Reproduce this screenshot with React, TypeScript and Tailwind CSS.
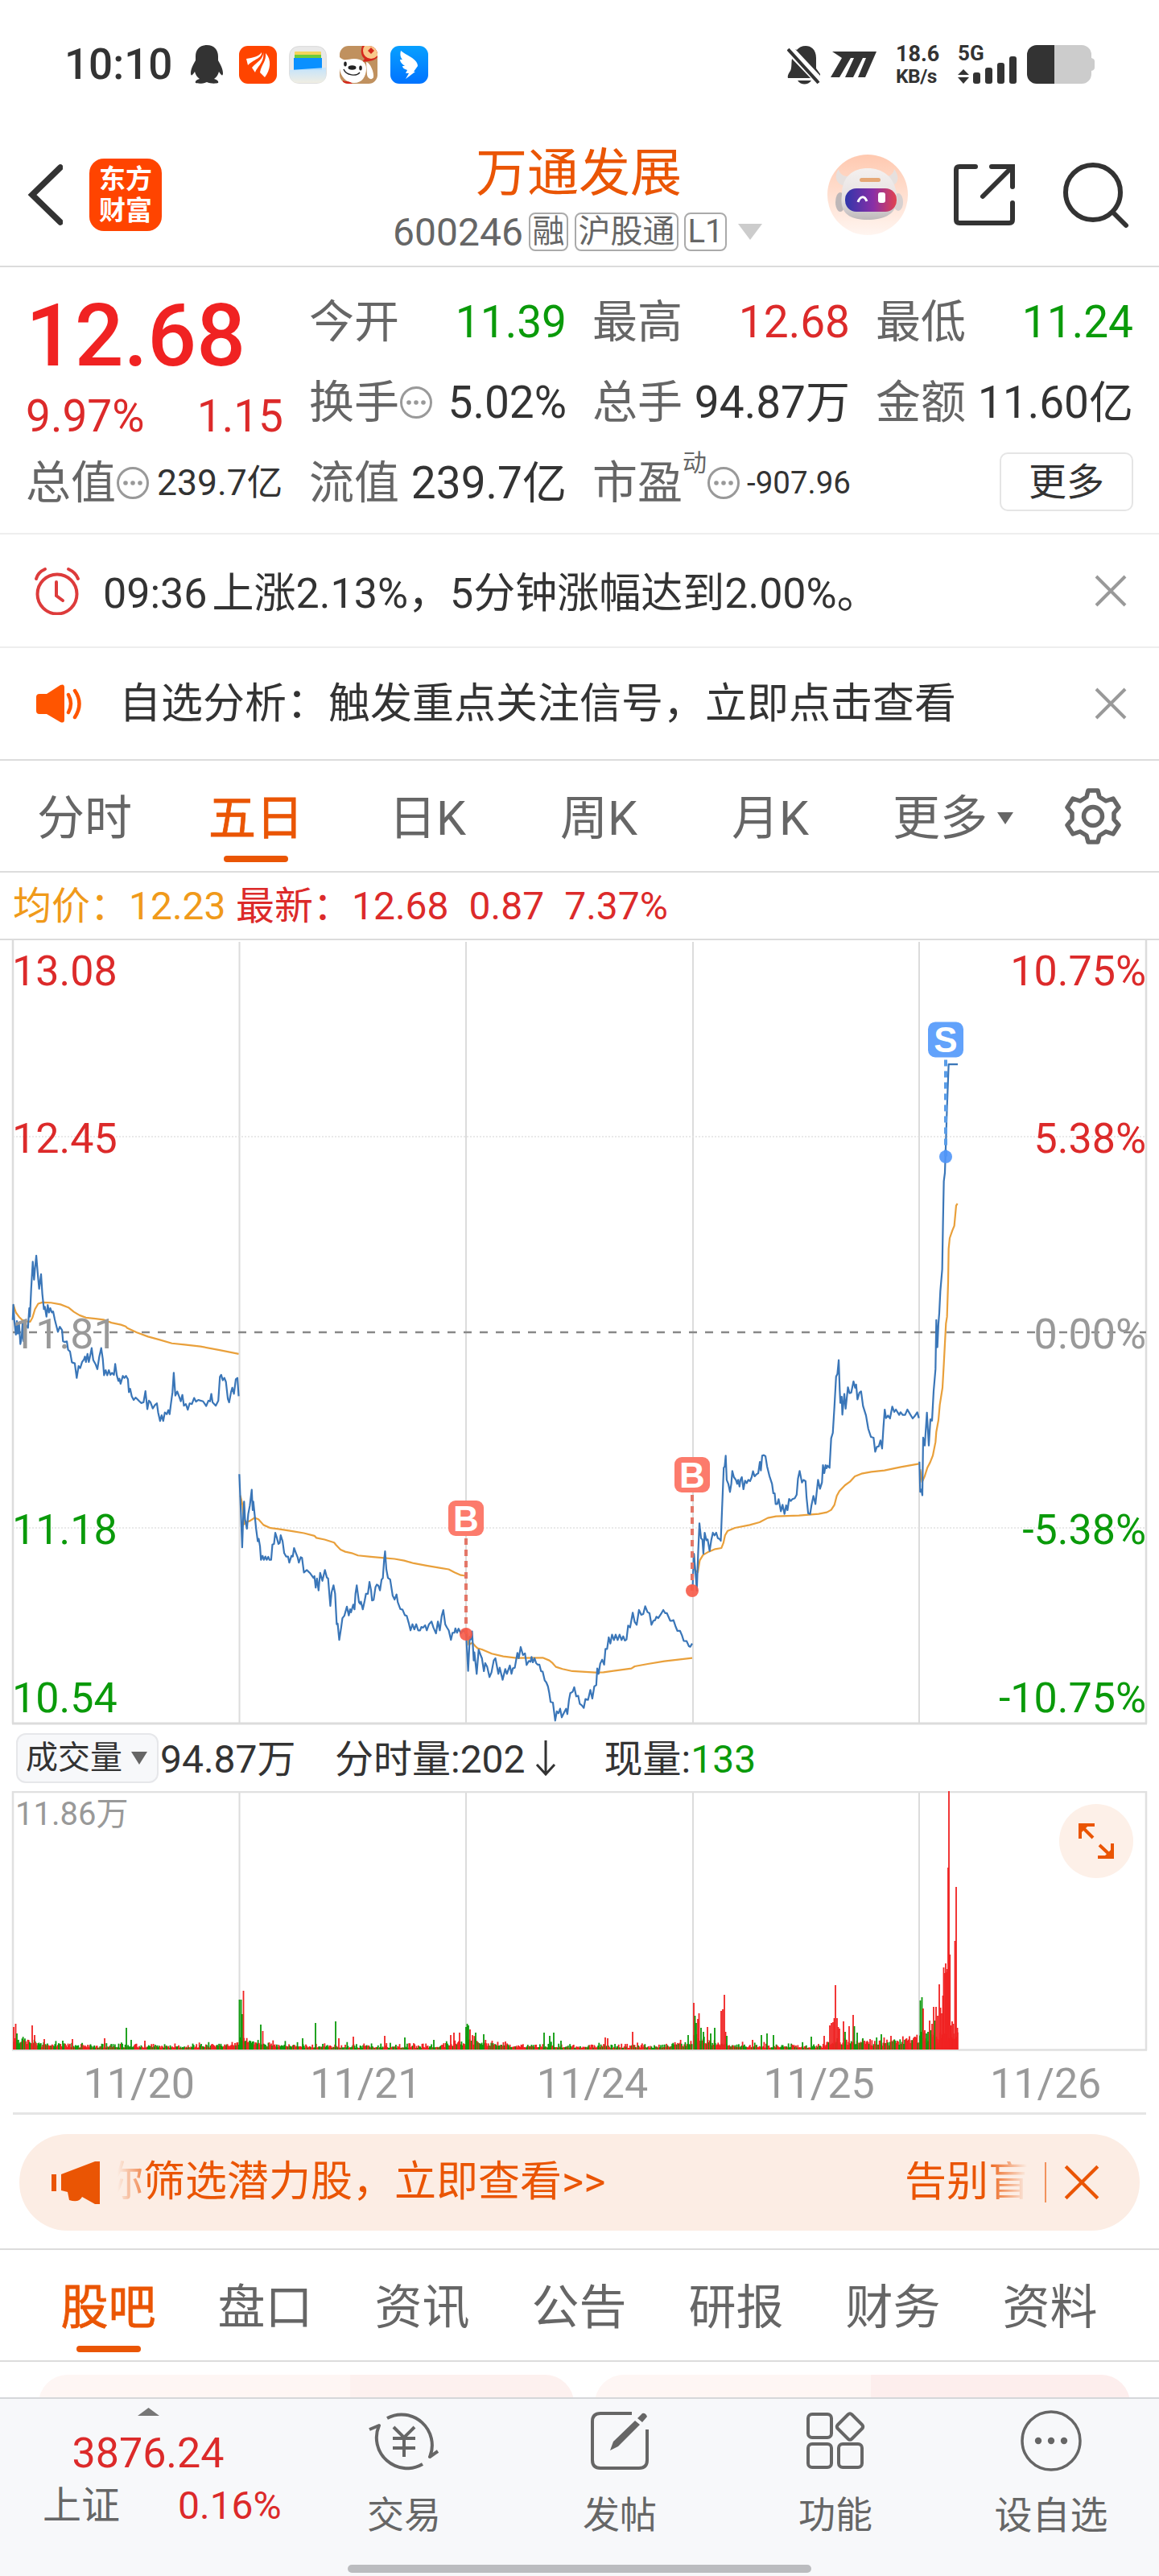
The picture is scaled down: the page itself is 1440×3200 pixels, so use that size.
import React from "react";

const INK = "#333333";
const GRAY = "#666666";

// price polylines: one group per stretch of days, each in its own plot space
const priceGroups = [
  {
    transform: "translate(0 332) scale(.3954 .4209)",
    price: [
      "40,332 42,287 45,335 50,375 53,335 56,372 60,345 64,403 68,385 71,340 74,395 78,340 83,350 88,355 92,297 94,322 98,240 103,160 107,213 110,180 114,142 119,200 123,240 129,197 133,255 138,300 141,293 146,322 150,288 154,310 158,297 163,310 167,307 172,330 176,345 182,367 188,352 195,362 198,395 203,397 210,395 214,420 220,425 226,457 235,460 241,503 247,468 252,474 258,456 264,448 267,440 270,456 275,432 279,456 284,435 288,415 293,450 300,462 306,477 312,440 318,415 323,447 327,495 332,480 337,495 342,480 347,494 352,488 358,494 362,462 367,495 372,512 375,505 379,520 386,497 391,503 396,497 402,507 405,545 409,535 414,557 420,568 426,561 432,566 438,572 444,577 451,575 457,542 463,595 468,570 473,575 480,593 487,583 493,578 497,605 503,630 508,613 513,630 518,605 524,610 529,598 533,610 537,580 542,545 546,488 551,555 557,543 563,558 568,572 573,553 578,585 584,580 590,597 596,578 603,580 610,562 616,573 623,568 630,570 638,572 648,586 655,570 660,572 664,550 668,575 678,585 686,570 691,500 695,494 700,510 705,503 710,515 716,565 720,575 726,545 730,532 735,550 741,507 746,503 750,557",
      "752,787 757,900 761,1003 764,920 767,868 770,920 776,948 780,905 785,880 791,833 794,893 796,868 800,905 805,950 810,985 813,978 817,1000 820,1040 825,1028 829,1040 834,1030 838,1040 843,1031 847,1040 852,1040 856,995 861,993 865,960 870,975 875,993 879,990 882,967 888,985 893,1020 899,1030 905,1030 909,1048 916,1028 920,1030 924,1005 930,1020 935,1032 939,1048 945,1032 949,1034 955,1077 964,1070 975,1080 985,1093 988,1088 992,1122 996,1095 1001,1130 1006,1078 1013,1102 1021,1070 1027,1092 1031,1095 1038,1176 1042,1135 1048,1115 1053,1140 1058,1230 1061,1228 1066,1276 1072,1240 1076,1212 1082,1205 1090,1178 1096,1204 1100,1186 1103,1195 1110,1172 1114,1186 1117,1140 1121,1115 1128,1165 1132,1170 1134,1163 1140,1186 1146,1160 1150,1140 1156,1140 1161,1105 1166,1130 1169,1160 1174,1158 1180,1120 1184,1113 1189,1116 1194,1130 1199,1098 1203,1094 1207,1040 1210,1015 1214,1068 1219,1093 1226,1098 1234,1146 1240,1157 1246,1142 1250,1165 1258,1185 1265,1187 1272,1203 1278,1205 1284,1225 1290,1248 1296,1230 1302,1245 1308,1230 1314,1248 1320,1248 1324,1238 1329,1240 1336,1233 1341,1248 1348,1230 1356,1222 1362,1240 1370,1257 1376,1222 1382,1248 1388,1205 1393,1188 1399,1230 1404,1239 1410,1248 1417,1276 1422,1255 1428,1255 1431,1242 1436,1255 1441,1243 1448,1257 1455,1248 1463,1255",
    ],
    average: [
      "42,287 50,310 62,325 70,332 82,336 95,337 102,325 110,300 120,284 133,280 160,281 190,286 215,295 232,308 250,318 270,325 300,328 325,331 350,340 380,346 395,351 400,356 430,369 465,381 500,390 540,401 580,405 630,410 690,421 750,432",
      "755,850 762,877 767,935 775,928 785,925 800,916 812,920 828,937 850,946 875,949 915,955 955,961 988,969 994,975 1020,980 1050,989 1056,996 1070,1010 1085,1016 1105,1020 1125,1027 1165,1031 1200,1034 1240,1037 1270,1042 1300,1050 1340,1057 1385,1064 1410,1068 1428,1077 1448,1085 1463,1087",
    ],
  },
  {
    transform: "translate(560 532) scale(.4082 .3333)",
    price: [
      "47,990 50,1060 53,1127 58,1000 61,1010 65,980 70,1088 72,1058 79,1138 85,1048 91,1068 95,1080 101,1128 105,1098 111,1112 118,1150 124,1133 131,1088 136,1080 145,1138 149,1115 158,1160 166,1120 171,1138 180,1107 185,1138 189,1118 195,1115 203,1060 207,1080 213,1038 220,1068 226,1062 231,1105 238,1090 243,1093 246,1075 250,1095 255,1080 260,1098 265,1104 270,1104 275,1128 280,1130 286,1162 291,1170 296,1185 300,1210 304,1243 311,1245 318,1312 323,1278 328,1285 333,1268 338,1300 344,1285 351,1268 355,1288 360,1235 364,1210 371,1205 376,1188 382,1222 388,1220 393,1250 399,1255 405,1265 410,1232 418,1235 425,1198 431,1230 437,1185 443,1180 446,1118 450,1138 455,1100 461,1085 467,1104 471,1045 476,1045 481,1002 486,1025 491,992 497,1012 502,992 508,1012 514,992 520,1012 525,998 530,1014 535,1010 540,958 546,965 554,910 560,945 566,955 573,900 580,918 586,915 592,886 599,908 605,912 611,955 617,940 622,938 626,925 632,930 640,915 647,900 653,912 658,912 668,940 674,940 678,938 684,960 690,978 698,978 704,995 709,1015 718,1016 725,1035 729,1037 735,1025",
      "736,828 740,690 745,760 749,828 753,690 757,577 762,633 766,637 769,690 773,612 778,640 782,637 788,680 793,640 798,612 803,622 808,612 813,632 818,635 822,642 826,520 831,370 834,365 837,325 840,415 845,430 850,460 854,430 857,382 862,405 868,415 872,430 875,415 879,440 882,415 886,405 891,450 896,418 901,427 906,415 911,420 916,405 920,383 925,402 930,395 936,390 941,348 944,380 948,325 953,323 958,327 963,365 970,400 978,430 982,465 986,465 989,505 994,505 998,487 1005,532 1010,508 1016,542 1021,510 1025,528 1030,486 1035,494 1040,487 1047,484 1053,470 1057,410 1062,382 1069,425 1074,415 1080,420 1083,480 1088,540 1094,542 1098,510 1104,475 1110,505 1118,415 1124,448 1130,425 1133,360 1137,390 1141,360 1144,372 1147,362 1153,370 1158,260 1163,240 1168,140 1173,30 1177,20 1181,-31 1184,80 1186,128 1190,105 1192,172 1198,95 1202,150 1209,70 1214,92 1219,90 1226,48 1231,72 1234,60 1238,115 1244,90 1249,85 1255,140 1264,175 1271,225 1279,255 1287,258 1292,310 1297,292 1303,290 1308,268 1313,298 1317,220 1321,153 1325,185 1331,175 1337,186 1344,142 1350,162 1355,153 1365,173 1369,163 1376,173 1383,173 1390,153 1398,170 1406,186 1412,178 1420,163 1425,185",
    ],
    average: [
      "50,985 55,1030 66,1022 75,1035 82,1043 95,1047 125,1063 160,1073 200,1079 280,1078 300,1088 310,1098 320,1112 340,1120 370,1128 440,1133 465,1132 500,1126 550,1118 560,1110 600,1101 650,1091 735,1079",
      "740,690 743,750 752,760 758,715 768,695 785,683 805,673 824,669 830,650 835,622 843,605 865,594 910,583 940,573 965,557 990,551 1060,548 1120,542 1145,536 1158,527 1168,508 1175,475 1183,457 1200,435 1215,422 1230,402 1250,392 1280,385 1320,380 1370,367 1425,355",
    ],
  },
  {
    transform: "translate(1000 72) scale(.3333 .4209)",
    price: [
      "427,1368 430,1457 434,1450 438,1467 441,1297 447,1320 455,1223 462,1320 468,1243 474,1247 480,1160 487,1095 490,950 494,1030 498,960 501,930 505,865 512,800 515,660 518,540 522,515 524,467 530,320 536,195 570,195",
    ],
    average: [
      "430,1390 437,1428 447,1410 457,1385 467,1370 477,1350 487,1310 490,1280 498,1245 503,1200 513,1150 518,1080 526,960 530,940 534,840 536,740 540,708 550,685 557,672 564,612 569,606",
    ],
  },
];

const dayLines = [297.5, 579, 861, 1142];

const leftAxis = [
  { y: 56, text: "13.08", fill: "#dc2a2a" },
  { y: 264, text: "12.45", fill: "#dc2a2a" },
  { y: 507, text: "11.81", fill: "#999999" },
  { y: 750, text: "11.18", fill: "#0a9a0a" },
  { y: 959, text: "10.54", fill: "#0a9a0a" },
];

const rightAxis = [
  { y: 56, text: "10.75%", fill: "#dc2a2a" },
  { y: 264, text: "5.38%", fill: "#dc2a2a" },
  { y: 507, text: "0.00%", fill: "#999999" },
  { y: 750, text: "-5.38%", fill: "#0a9a0a" },
  { y: 959, text: "-10.75%", fill: "#0a9a0a" },
];

const markers = [
  { x: 579, top: 696, dot: 862, label: "B", fill: "#fc7b6c", line: "#e37768", dotFill: "#f75a48" },
  { x: 860, top: 642, dot: 808, label: "B", fill: "#fc7b6c", line: "#e37768", dotFill: "#f75a48" },
  { x: 1175, top: 101.5, dot: 269, label: "S", fill: "#62a2fb", line: "#5a9de8", dotFill: "#4f95f8" },
];

// [x, height, up]
const spikes: [number, number, number][] = [
  [17, 28, 1], [19.5, 32, 1], [21, 20, 0], [40, 30, 1], [43, 18, 1], [55, 13, 1], [78, 11, 0], [90, 13, 1], [130, 14, 1], [157, 27, 0], [163, 12, 0], [180, 11, 1],
  [297.5, 62, 0], [299.5, 62, 0], [301, 44, 0], [302.5, 73, 1], [324, 31, 0], [326.5, 23, 1], [376, 14, 0], [392, 33, 0], [417, 35, 0], [421, 14, 1], [439, 16, 1], [478, 17, 1], [503, 15, 0], [539, 12, 0], [560, 18, 1], [564, 21, 1], [571, 21, 1],
  [579, 28, 0], [580.5, 32, 0], [582, 30, 0], [584, 25, 1], [591, 21, 0], [601, 19, 0], [628, 10, 1], [676, 21, 0], [683, 17, 0], [688, 21, 0], [697, 11, 0], [752, 15, 1], [755, 14, 1], [786, 22, 1],
  [855, 18, 0], [862, 58, 1], [863.5, 42, 0], [865, 33, 0], [867, 38, 1], [868.5, 45, 1], [871, 27, 0], [874, 22, 0], [879, 28, 1], [883, 20, 0], [888, 27, 0], [896, 48, 1], [898, 50, 1], [900, 68, 1], [901.5, 22, 1], [903, 17, 0],
  [935, 12, 1], [946, 18, 0], [953, 20, 0], [961, 18, 0], [1008, 16, 0], [1024, 17, 1], [1031, 30, 1], [1033, 33, 1], [1035, 34, 1], [1036.5, 39, 1], [1038, 80, 1], [1040, 39, 1], [1041.5, 28, 1], [1043, 26, 1], [1048, 35, 1], [1050, 22, 0], [1055, 29, 1], [1060, 43, 1], [1061.5, 29, 0], [1065, 21, 0], [1072, 14, 0], [1095, 19, 0], [1107, 17, 1],
  [1135, 14, 1], [1138, 15, 1], [1143.5, 61, 0], [1145.5, 65, 0], [1147, 51, 1], [1149, 24, 1], [1151, 20, 0], [1153, 22, 0], [1155, 36, 1], [1156.5, 24, 0], [1158, 32, 1], [1160, 53, 1], [1161.5, 36, 0], [1163, 53, 1], [1165, 42, 1], [1167, 81, 1], [1168.5, 52, 1], [1170, 45, 1], [1171.5, 67, 1], [1172.5, 102, 1], [1174, 95, 1], [1175, 107, 1], [1176, 96, 1], [1177, 100, 1], [1178, 226, 1], [1179, 321, 1], [1180.2, 118, 1], [1181.5, 30, 1], [1183, 35, 1], [1184.5, 32, 1], [1186.5, 135, 1], [1188, 202, 1], [1189.5, 27, 1],
];

function buildVolume() {
  const bars: [number, number, number][] = [];
  let seed = 11;
  const rnd = () => {
    seed = (seed * 16807) % 2147483647;
    return seed / 2147483647;
  };
  [16, 297.5, 579, 861].forEach((start, day) => {
    for (let i = 0; i < 241; i++) {
      const opening = 13 * Math.exp(-i / 24);
      const closing = i > 205 ? ((i - 205) / 36) * 6 : 0;
      const busy = day === 3 && i > 140 ? 6 : 0;
      const h = 2 + rnd() * rnd() * 8 + (opening + closing + busy) * (0.35 + rnd() * 0.75);
      bars.push([start + 1 + i * 1.165, h, rnd() > 0.45 ? 1 : 0]);
    }
  });
  for (let x = 1143; x < 1190; x += 1.2) bars.push([x, 8 + rnd() * 14, x > 1150 ? 1 : 0]);
  return bars.concat(spikes);
}

const volumeBars = buildVolume();

function Dots() {
  return (
    <svg className="h-[42px] w-[42px] shrink-0" viewBox="0 0 42 42" fill="none">
      <circle cx="21" cy="21" r="18.500" stroke="#999999" strokeWidth="3" />
      <circle cx="12" cy="21" r="2.800" fill="#999" />
      <circle cx="21" cy="21" r="2.800" fill="#999" />
      <circle cx="30" cy="21" r="2.800" fill="#999" />
    </svg>
  );
}

function Cross({ color = "#999999", size = 40, width = 4 }: { color?: string; size?: number; width?: number }) {
  return (
    <svg width={size} height={size} viewBox="0 0 40 40" className="shrink-0">
      <path d="M2 2 38 38M38 2 2 38" stroke={color} strokeWidth={width} />
    </svg>
  );
}

function StatusBar() {
  return (
    <div className="flex h-[160px] items-center pl-[80px] text-[#333]">
      <span className="w-[157px] text-[53px] font-medium leading-none">10:10</span>
      {/* qq */}
      <svg className="h-[48px] w-[40px]" viewBox="0 0 40 48">
        <path d="M20 0C11 0 6 6 6 14v5C3 24 0 30 0 35c0 4 2 3 5-2 1 4 3 7 6 9-4 1-6 3-5 5 3 1 10 1 14-1 4 2 11 2 14 1 1-2-1-4-5-5 3-2 5-5 6-9 3 5 5 6 5 2 0-5-3-11-6-16v-5C34 6 29 0 20 0Z" fill={INK} />
      </svg>
      <svg className="ml-[20px] h-[47px] w-[47px]" viewBox="0 0 47 47">
        <rect width="47" height="47" rx="11" fill="#ff4400" />
        <path d="M9 16C17 15 25 13 28 8 29 15 18 17 11 24Z" fill="#fff" />
        <path d="M30 8C31 16 22 20 16 27L20 33C23 25 32 20 30 8Z" fill="#fff" />
        <path d="M33 9C34 20 28 22 26 33L32 39C39 30 41 17 33 9Z" fill="#fff" />
      </svg>
      <svg className="ml-[15px] h-[47px] w-[47px]" viewBox="0 0 47 47">
        <defs>
          <linearGradient id="wallet" x1="0" y1="0" x2="0" y2="1">
            <stop offset="0" stopColor="#bfe3ff" />
            <stop offset="1" stopColor="#f1eee2" />
          </linearGradient>
        </defs>
        <rect x=".7" y=".7" width="45.600" height="45.600" rx="11" fill="#e9e9e9" stroke="#d9d9d9" />
        <rect x="7" y="7" width="33" height="8" rx="1" fill="#f4d45c" />
        <rect x="7" y="11" width="33" height="8" fill="#6ccb3c" />
        <rect x="6" y="15" width="35" height="15" fill="#0a90ff" />
        <path d="M1 30 46 27v9c0 7-4 10-10 10H11C5 46 1 42 1 36Z" fill="url(#wallet)" opacity=".9" />
      </svg>
      <svg className="ml-[16px] h-[47px] w-[47px]" viewBox="0 0 47 47">
        <defs>
          <clipPath id="dogClip"><rect width="47" height="47" rx="11" /></clipPath>
        </defs>
        <g clipPath="url(#dogClip)">
          <rect width="47" height="47" fill="#c0915f" />
          <path d="M28 0C25 8 28 14 31 16L28 20C38 19 44 18 47 14V0Z" fill="#d5281c" />
          <circle cx="39" cy="6" r="10" fill="#f9c98b" />
          <path d="m39 2 4 4-4 4-4-4Z" fill="#d5281c" />
          <path d="M0 14C6 20 10 16 18 16 28 16 33 21 33 28 33 38 28 46 18 46 8 46 1 38 0 28Z" fill="#fff" />
          <path d="M33 20C38 21 43 33 42 39 40 43 35 41 34 36Z" fill="#fff" />
          <ellipse cx="15.500" cy="27" rx="5" ry="2.800" fill="#222" />
          <ellipse cx="7" cy="22.500" rx="1.800" ry="3" fill="#222" />
          <ellipse cx="26" cy="27.500" rx="1.800" ry="3" fill="#222" />
          <path d="M5 29C8 37 21 38 25 33" stroke="#222" strokeWidth="1.400" fill="none" />
          <path d="M4 43C8 45 12 43 16 47H4Z" fill="#d5281c" />
        </g>
      </svg>
      <svg className="ml-[16px] h-[47px] w-[47px]" viewBox="0 0 47 47">
        <defs>
          <linearGradient id="wing" x1="0" y1="0" x2="0" y2="1">
            <stop offset="0" stopColor="#08a0ff" />
            <stop offset="1" stopColor="#0073ff" />
          </linearGradient>
        </defs>
        <rect width="47" height="47" rx="11" fill="url(#wing)" />
        <path d="M13 6C20 12 34 16 34 25L29 32H31L19 41 23 34H19L21 30C17 29 15 27 15 25L18 25C14 22 12 20 12 17L15 17C12 14 12 10 13 6Z" fill="#fff" />
      </svg>

      <svg className="ml-[446px] h-[49px] w-[42px]" viewBox="0 0 42 49">
        <path d="M12 6C18-2 36-2 36 16V29L41 36V38L10 5ZM6 17 29 41H1C0 38 2 35 4 32 6 28 5 22 6 17Z" fill={INK} />
        <path d="m1 5 38 42" stroke={INK} strokeWidth="4" />
        <path d="M13 44H30C26 50 17 50 13 44Z" fill={INK} />
      </svg>
      <svg className="ml-[12px] h-[32px] w-[57px]" viewBox="0 0 57 32">
        <path d="M2 0H57L43 32H34L44 8H40L28 32H18L29 8H25L11 32H0L14 8Z" fill={INK} />
      </svg>
      <div className="ml-[24px] flex w-[77px] flex-col pt-[2px] text-[27px] font-bold leading-[28px]">
        <span>18.6</span>
        <span className="text-[24.500px] tracking-[-0.5px]">KB/s</span>
      </div>
      <div className="flex w-[86px] flex-col">
        <span className="text-[26px] font-bold leading-[20px]">5G</span>
        <svg className="-mt-[6px] h-[34px] w-[74px]" viewBox="0 0 74 34">
          <path d="M0 23 7 16l7 7ZM0 26h14l-7 8Z" fill={INK} />
          <rect x="19" y="20" width="9" height="14" rx="3" fill={INK} />
          <rect x="34" y="14" width="9" height="20" rx="3" fill={INK} />
          <rect x="49" y="8" width="9" height="26" rx="3" fill={INK} />
          <rect x="64" y="0" width="9" height="34" rx="3" fill={INK} />
        </svg>
      </div>
      <svg className="h-[48px] w-[84px]" viewBox="0 0 84 48">
        <path d="M34 0H68a12 12 0 0 1 12 12v4q4 1 4 4v8q0 3-4 4v4a12 12 0 0 1-12 12H34Z" fill="#cccccc" />
        <path d="M34 0H12A12 12 0 0 0 0 12v24a12 12 0 0 0 12 12h22Z" fill={INK} />
      </svg>
    </div>
  );
}

function Header() {
  return (
    <div className="flex h-[172px] items-center border-b-2 border-[#dcdcdc] pb-[6px] pl-[34px]">
      <svg className="h-[76px] w-[44px]" viewBox="0 0 44 76" fill="none">
        <path d="M41 4 6 38l35 34" stroke={INK} strokeWidth="7.500" strokeLinecap="round" />
      </svg>
      <div className="ml-[33px] flex h-[90px] w-[90px] flex-col items-center justify-center rounded-[18px] bg-[#ff4400] text-[33px] font-bold leading-[39px] text-white">
        <span>东方</span>
        <span>财富</span>
      </div>
      <div className="ml-[287px] flex h-full w-[462px] flex-col pt-[20px]">
        <div className="pl-[103px] text-[64px] leading-[72px] text-[#ea5504]">万通发展</div>
        <div className="mt-[11px] flex h-[50px] items-center text-[48px] leading-none text-[#666]">
          <span className="w-[169px] pt-[2px]">600246</span>
          <span className="flex h-[48px] w-[49px] items-center justify-center rounded-lg border-2 border-[#aaa] text-[40px] leading-none">融</span>
          <span className="ml-[8px] flex h-[48px] w-[129px] items-center justify-center rounded-lg border-2 border-[#aaa] text-[40px] leading-none">沪股通</span>
          <span className="ml-[7px] flex h-[48px] w-[53px] items-center justify-center rounded-lg border-2 border-[#aaa] text-[40px] leading-none">L1</span>
          <svg className="ml-[14px] h-[20px] w-[30px]" viewBox="0 0 30 20">
            <path d="M0 0H30L15 20Z" fill="#cccccc" />
          </svg>
        </div>
      </div>
      {/* assistant */}
      <svg className="ml-[78px] h-[100px] w-[100px]" viewBox="0 0 100 100">
        <defs>
          <linearGradient id="halo" x1="0" y1="0" x2="0" y2="1">
            <stop offset="0" stopColor="#ffc9b0" />
            <stop offset="1" stopColor="#fff5f0" />
          </linearGradient>
          <linearGradient id="visor" x1="0" y1="0" x2="1" y2="0">
            <stop offset="0" stopColor="#2f36ab" />
            <stop offset=".55" stopColor="#8a2fa6" />
            <stop offset="1" stopColor="#e2434f" />
          </linearGradient>
          <linearGradient id="helmet" x1="0" y1="0" x2="0" y2="1">
            <stop offset="0" stopColor="#f4f0ef" />
            <stop offset=".6" stopColor="#e6e1e1" />
            <stop offset="1" stopColor="#bdb8ba" />
          </linearGradient>
        </defs>
        <circle cx="50" cy="50" r="50" fill="url(#halo)" />
        <path d="M14 18C8 26 10 37 22 39L28 27C20 28 15 24 14 18ZM83 18C89 26 90 36 79 39L70 27C78 28 82 24 83 18Z" fill="#e6e0de" />
        <ellipse cx="16" cy="59" rx="6" ry="12" fill="#bdb7b8" />
        <ellipse cx="88" cy="59" rx="6" ry="11" fill="#d6d0d0" />
        <path d="M18 50C18 27 32 17 50 17S84 27 86 50C89 70 76 81 50 81S15 70 18 50Z" fill="url(#helmet)" />
        <rect x="22" y="42" width="64" height="29" rx="14" fill="url(#visor)" />
        <rect x="40" y="29" width="26" height="5" rx="2.500" fill="#e5a876" />
        <path d="M38 59C41 51 46 51 49 58" stroke="#fff" strokeWidth="3" fill="none" />
        <rect x="63" y="47" width="9" height="13" rx="3" fill="#fff" />
      </svg>
      <svg className="ml-[55px] h-[80px] w-[80px]" viewBox="0 0 80 80" fill="none" stroke={INK} strokeWidth="6" strokeLinecap="round">
        <path d="M29 5H9Q5 5 5 9V71Q5 75 9 75H71Q75 75 75 71V50" />
        <path d="M49 5H75V30M73 7 38 42" />
      </svg>
      <svg className="ml-[57px] h-[84px] w-[84px]" viewBox="0 0 84 84" fill="none" stroke={INK} strokeWidth="6" strokeLinecap="round">
        <circle cx="38" cy="39" r="34" />
        <path d="m64 65 15 15" />
      </svg>
    </div>
  );
}

function Cell({ label, value, tone, dots = false }: { label: string; value: string; tone: string; dots?: boolean }) {
  return (
    <div className="flex h-[100px] items-center justify-between whitespace-nowrap text-[55px] leading-none">
      <span className="flex items-center text-[56px] text-[#666]">
        {label}
        {dots && <Dots />}
      </span>
      <span className={tone}>{value}</span>
    </div>
  );
}

function Quote() {
  return (
    <div className="flex h-[332px] gap-[32px] border-b-2 border-[#eee] pl-[32px] pr-[32px] pt-[18px] leading-none">
      <div className="w-[320px]">
        <div className="flex h-[134px] items-center text-[107px] font-medium text-[#f02222]">12.68</div>
        <div className="flex h-[66px] items-center justify-between text-[55px] text-[#dc2a2a]">
          <span>9.97%</span>
          <span>1.15</span>
        </div>
        <div className="flex h-[100px] items-center whitespace-nowrap">
          <span className="shrink-0 text-[56px] text-[#666]">总值</span>
          <Dots />
          <span className="ml-[9px] text-[44.500px] text-[#333]">239.7亿</span>
        </div>
      </div>
      <div className="w-[320px]">
        <Cell label="今开" value="11.39" tone="text-[#0a9a0a]" />
        <Cell label="换手" value="5.02%" tone="text-[#333]" dots />
        <Cell label="流值" value="239.7亿" tone="text-[#333]" />
      </div>
      <div className="w-[320px]">
        <Cell label="最高" value="12.68" tone="text-[#dc2a2a]" />
        <Cell label="总手" value="94.87万" tone="text-[#333]" />
        <div className="flex h-[100px] items-center whitespace-nowrap">
          <span className="shrink-0 text-[56px] text-[#666]">市盈</span>
          <span className="mb-[50px] shrink-0 text-[30px] text-[#666]">动</span>
          <Dots />
          <span className="ml-[8px] text-[38.500px] text-[#333]">-907.96</span>
        </div>
      </div>
      <div className="w-[320px]">
        <Cell label="最低" value="11.24" tone="text-[#0a9a0a]" />
        <Cell label="金额" value="11.60亿" tone="text-[#333]" />
        <div className="flex h-[96px] items-center justify-end">
          <button className="h-[73px] w-[166px] rounded-[10px] border-2 border-[#e5e5e5] text-[47px] leading-none text-[#333]">更多</button>
        </div>
      </div>
    </div>
  );
}

function Alerts() {
  return (
    <div className="text-[52px] leading-none text-[#333]">
      <div className="flex h-[141px] items-center border-b-2 border-[#eee] pl-[42px] pr-[40px]">
        <svg className="h-[60px] w-[58px]" viewBox="0 0 58 60" fill="none" stroke="#dd3b3b" strokeWidth="4" strokeLinecap="round">
          <circle cx="29" cy="34" r="24.500" />
          <path d="M28 19V36L36 42" />
          <path d="M14 3Q5 7 3 15M43 3Q52 7 55 15" />
        </svg>
        <span className="ml-[28px] flex-1 whitespace-pre pt-[8px]">09:36<span className="ml-[6px]">上涨2.13%，5分钟涨幅达到2.00%。</span></span>
        <Cross />
      </div>
      <div className="flex h-[140px] items-center border-b-2 border-[#dcdcdc] pl-[44px] pr-[40px]">
        <svg className="h-[52px] w-[60px]" viewBox="0 0 60 52" fill="none">
          <path d="M5 14H14L31 3Q36 1 36 6V46Q36 51 31 49L14 39H5Q1 39 1 35V18Q1 14 5 14Z" fill="#ff5500" />
          <path d="M41 15Q47 26 41 37M49 10Q60 26 49 43" stroke="#ff5500" strokeWidth="4.500" strokeLinecap="round" />
        </svg>
        <span className="ml-[44px] flex-1 pt-[2px]">自选分析：触发重点关注信号，立即点击查看</span>
        <Cross />
      </div>
    </div>
  );
}

function PeriodTabs() {
  const tabs = ["分时", "五日", "日K", "周K", "月K"];
  return (
    <div className="flex h-[139px] items-center border-b-2 border-[#dcdcdc] text-[59px] leading-none text-[#666]">
      {tabs.map((tab) => (
        <div
          key={tab}
          className={
            tab === "五日"
              ? "relative flex h-full w-[213px] items-center justify-center pt-[5px] pr-[3px] text-[#ea5504] [-webkit-text-stroke:0.8px_#ea5504]"
              : "flex h-full w-[213px] items-center justify-center pt-[5px] pr-[3px]"
          }
        >
          {tab}
          {tab === "五日" && <span className="absolute bottom-[11px] h-[8px] w-[80px] rounded-full bg-[#ea5504]" />}
        </div>
      ))}
      <div className="flex h-full w-[213px] items-center pl-[44px] pt-[5px]">
        更多
        <svg className="ml-[12px] h-[15px] w-[20px]" viewBox="0 0 20 15">
          <path d="M0 0H20L10 15Z" fill={GRAY} />
        </svg>
      </div>
      <svg className="ml-[45px] h-[70px] w-[70px]" viewBox="0 0 70 70" fill="none" stroke={GRAY} strokeWidth="5.500" strokeLinejoin="round">
        <path d="M29 3H41L43 11 51 16 60 13 67 24 61 31V39L67 46 60 57 51 54 43 59 41 67H29L27 59 19 54 10 57 3 46 9 39V31L3 24 10 13 19 16 27 11Z" />
        <circle cx="35" cy="35" r="11.500" />
      </svg>
    </div>
  );
}

function PriceChart() {
  return (
    <>
      <div className="flex h-[84px] items-center border-b-2 border-[#dcdcdc] pl-[16px] pt-[2px] text-[48px] leading-none">
        <span className="w-[277px] text-[#f09a1a]">均价：12.23</span>
        <span className="whitespace-pre text-[#dc2a2a]">最新：12.68</span>
        <span className="ml-[25px] text-[#dc2a2a]">0.87</span>
        <span className="ml-[25px] text-[#dc2a2a]">7.37%</span>
      </div>
      <svg className="block h-[975px] w-full" viewBox="0 0 1440 975" fill="none">
        <g stroke="#dcdcdc" strokeWidth="2">
          {dayLines.map((x) => (
            <path key={x} d={`M${x} 2V973`} />
          ))}
          <path d="M16 0V973M1424 0V973" strokeWidth="2.500" />
          <path d="M15 973H1425" strokeWidth="3" />
        </g>
        <path d="M16 244H1424M16 730H1424" stroke="#e2e2e2" strokeWidth="1.500" strokeDasharray="2 2" />
        <path d="M16 487H1424" stroke="#888888" strokeWidth="2.500" strokeDasharray="10 10" />
        {priceGroups.map((group) => (
          <g key={group.transform} transform={group.transform} strokeLinejoin="round">
            {group.average.map((points) => (
              <polyline key={points} points={points} stroke="#e9a03b" strokeWidth="2.200" vectorEffect="non-scaling-stroke" />
            ))}
            {group.price.map((points) => (
              <polyline key={points} points={points} stroke="#3a76b8" strokeWidth="2.200" vectorEffect="non-scaling-stroke" />
            ))}
          </g>
        ))}
        <g fontSize="52">
          {leftAxis.map((t) => (
            <text key={t.text} x="15" y={t.y} fill={t.fill}>{t.text}</text>
          ))}
          {rightAxis.map((t) => (
            <text key={t.text} x="1424" y={t.y} fill={t.fill} textAnchor="end">{t.text}</text>
          ))}
        </g>
        {markers.map((m) => (
          <g key={m.x}>
            <path d={`M${m.x} ${m.top + 47}V${m.dot}`} stroke={m.line} strokeWidth="4" strokeDasharray="8 6" />
            <circle cx={m.x} cy={m.dot} r="8" fill={m.dotFill} opacity=".9" />
            <rect x={m.x - 22} y={m.top} width="44" height="44" rx="9" fill={m.fill} />
            <text x={m.x} y={m.top + 37.5} fill="#ffffff" fontSize="44" fontWeight="700" fontFamily="Liberation Sans, sans-serif" textAnchor="middle">{m.label}</text>
          </g>
        ))}
      </svg>
    </>
  );
}

function VolumeChart() {
  return (
    <>
      <div className="flex h-[82px] items-center pl-[20px] text-[48px] leading-none text-[#333]">
        <div className="flex h-[62px] w-[177px] items-center rounded-xl border-2 border-[#e6e7ea] bg-[#f7f8fa] pl-[10px] text-[40px]">
          成交量
          <svg className="ml-[11px] h-[16px] w-[20px]" viewBox="0 0 20 16">
            <path d="M0 0H20L10 16Z" fill={GRAY} />
          </svg>
        </div>
        <span className="ml-[2px] w-[217px] pt-[3px]">94.87万</span>
        <span className="pt-[3px]">分时量:202</span>
        <svg className="ml-[12px] h-[46px] w-[26px]" viewBox="0 0 26 46" fill="none" stroke={INK} strokeWidth="3">
          <path d="M13 1V43M2 31 13 43 24 31" />
        </svg>
        <span className="ml-[60px] pt-[3px]">现量:<span className="text-[#0a9a0a]">133</span></span>
      </div>
      <div className="relative">
        <svg className="block h-[323px] w-full" viewBox="0 0 1440 323" fill="none">
          <path d="M16 1H1424M16 0V322M1424 0V322M15 321.500H1425" stroke="#e0e0e0" strokeWidth="2.500" />
          {dayLines.map((x) => (
            <path key={x} d={`M${x} 2V320`} stroke="#dcdcdc" strokeWidth="2" />
          ))}
          {volumeBars.map(([x, h, up], i) => (
            <rect key={i} x={x - 0.9} y={321 - h} width="1.800" height={h} fill={up ? "#f02222" : "#0a9a0a"} />
          ))}
          <text x="19" y="42" fontSize="40" fill="#999999">11.86万</text>
        </svg>
        <div className="absolute right-[32px] top-[16px] flex h-[92px] w-[92px] items-center justify-center rounded-full bg-[#fdf0e8]">
          <svg className="h-[46px] w-[46px]" viewBox="0 0 46 46" fill="none" stroke="#ea5504" strokeWidth="4">
            <path d="M3 20V3H21M3 3 19 19M43 26V43H25M43 43 27 28" />
            <path d="M3 3H14L3 14ZM43 43H32L43 32Z" fill="#ea5504" stroke="none" />
          </svg>
        </div>
      </div>
      <div className="mx-4 flex h-[79px] items-center border-b-[3px] border-[#e5e5e5] pl-[16px] pt-[5px] text-[52px] leading-none text-[#999]">
        {["11/20", "11/21", "11/24", "11/25", "11/26"].map((d) => (
          <span key={d} className="w-[281.600px] shrink-0 text-center">{d}</span>
        ))}
      </div>
    </>
  );
}

function Banner() {
  return (
    <div className="flex h-[168px] items-center border-b-2 border-[#dcdcdc] px-6 pt-[2px]">
      <div className="flex h-[120px] w-full items-center rounded-full bg-[#fcede4] pl-[40px] text-[52px] leading-none text-[#ea5504]">
        <svg className="h-[53px] w-[60px]" viewBox="0 0 60 53" fill="#ea5504">
          <path d="M0 16H6V37H0ZM12 16 54 0H60V53H54L38 44Q34 52 22 48L20 38 12 36Z" />
        </svg>
        <div className="ml-[22px] flex h-[60px] w-[32px] items-center justify-end overflow-hidden [mask-image:linear-gradient(to_right,transparent,#000000aa)]">
          <span className="shrink-0">你</span>
        </div>
        <span className="w-[946px]">筛选潜力股，立即查看&gt;&gt;</span>
        <div className="w-[152px] overflow-hidden whitespace-nowrap [mask-image:linear-gradient(to_right,#000_66%,transparent)]">告别盲</div>
        <div className="ml-[22px] h-[50px] w-[2px] bg-[#ea5504]/60" />
        <div className="ml-[22px]">
          <Cross color="#ea5504" size={44} width={3.8} />
        </div>
      </div>
    </div>
  );
}

function InfoTabs() {
  return (
    <div className="flex h-[139px] items-center border-b-2 border-[#dcdcdc] px-[37px] text-[59px] leading-none text-[#666]">
      {["股吧", "盘口", "资讯", "公告", "研报", "财务", "资料"].map((tab) => (
        <div
          key={tab}
          className={
            tab === "股吧"
              ? "relative flex h-full w-[195px] shrink-0 items-center justify-center pt-[5px] text-[#ea5504] [-webkit-text-stroke:0.8px_#ea5504]"
              : "flex h-full w-[195px] shrink-0 items-center justify-center pt-[5px]"
          }
        >
          {tab}
          {tab === "股吧" && <span className="absolute bottom-[10px] h-[8px] w-[80px] rounded-full bg-[#ea5504]" />}
        </div>
      ))}
    </div>
  );
}

function BottomNav() {
  return (
    <div className="h-[222px] border-t-2 border-[#d5d7da] bg-[#f7f8fa] leading-none text-[#666]">
      <div className="flex h-[206px]">
        <div className="flex w-[368px] flex-col items-center pt-[11px]">
          <svg className="h-[10px] w-[27px]" viewBox="0 0 27 10">
            <path d="M0 10H27L13.500 0Z" fill="#777" />
          </svg>
          <span className="mt-[21px] text-[52px] text-[#dc2a2a]">3876.24</span>
          <div className="mt-[15px] flex w-full items-center pl-[53px]">
            <span className="w-[168px] text-[48px]">上证</span>
            <span className="text-[48px] text-[#dc2a2a]">0.16%</span>
          </div>
        </div>
        <div className="flex w-[268px] flex-col items-center pt-[11px] text-[46px]">
          <svg className="h-[82px] w-[90px]" viewBox="0 0 90 82" fill="none" stroke={GRAY} strokeWidth="4">
            <path d="M24 13A38 38 0 0 1 77 61L87 54" strokeLinejoin="round" />
            <path d="M68 70A38 38 0 0 1 14 22L2 27" strokeLinejoin="round" />
            <path d="M32 24 45 37 58 24M45 37V61M31 38H59M31 50H59" />
          </svg>
          <span className="mt-[28px]">交易</span>
        </div>
        <div className="flex w-[268px] flex-col items-center pt-[14px] text-[46px]">
          <svg className="h-[76px] w-[76px]" viewBox="0 0 76 76" fill="none" stroke={GRAY} strokeWidth="4">
            <path d="M53 4H14Q4 4 4 14V62Q4 72 14 72H62Q72 72 72 62V24" />
            <path d="M26 50 30 39 57 13 63 18 36 45ZM60 10 66 4Q70 3 72 8L66 15Z" fill={GRAY} stroke="none" />
          </svg>
          <span className="mt-[31px]">发帖</span>
        </div>
        <div className="flex w-[268px] flex-col items-center pt-[14px] text-[46px]">
          <svg className="h-[76px] w-[76px]" viewBox="0 0 76 76" fill="none" stroke={GRAY} strokeWidth="4" strokeLinejoin="round">
            <rect x="4" y="5" width="29" height="29" rx="5" />
            <rect x="4" y="42" width="29" height="29" rx="5" />
            <rect x="42" y="42" width="29" height="29" rx="5" />
            <path d="M53.500 5.500Q56 3 58.500 5.500L71 18Q73.500 20.500 71 23L58.500 35.500Q56 38 53.500 35.500L41 23Q38.500 20.500 41 18Z" />
          </svg>
          <span className="mt-[31px]">功能</span>
        </div>
        <div className="flex w-[268px] flex-col items-center pt-[13px] text-[47px]">
          <svg className="h-[78px] w-[78px]" viewBox="0 0 78 78" fill="none">
            <circle cx="39" cy="39" r="36" stroke={GRAY} strokeWidth="3.500" />
            <circle cx="23" cy="39" r="4.200" fill={GRAY} />
            <circle cx="39" cy="39" r="4.200" fill={GRAY} />
            <circle cx="55" cy="39" r="4.200" fill={GRAY} />
          </svg>
          <span className="mt-[30px]">设自选</span>
        </div>
      </div>
      <div className="mx-auto h-[10px] w-[576px] rounded-full bg-[#bbbcbf]" />
    </div>
  );
}

export default function App() {
  return (
    <div className="h-[3200px] w-[1440px] overflow-hidden bg-white font-['Roboto','Noto_Sans_CJK_SC',sans-serif]">
      <StatusBar />
      <Header />
      <Quote />
      <Alerts />
      <PeriodTabs />
      <PriceChart />
      <VolumeChart />
      <Banner />
      <InfoTabs />
      {/* feed cards cut off by the nav */}
      <div className="flex h-[44px] gap-[26px] overflow-hidden pl-[48px] pt-[16px]">
        <div className="flex h-[60px] w-[665px] overflow-hidden rounded-t-[36px] bg-[#fef6f4]">
          <div className="ml-auto w-[278px] bg-[#fdf1ef]" />
        </div>
        <div className="flex h-[60px] w-[665px] overflow-hidden rounded-t-[36px] bg-[#fef6f4]">
          <div className="ml-auto w-[322px] bg-[#fdeeed]" />
        </div>
      </div>
      <BottomNav />
    </div>
  );
}
